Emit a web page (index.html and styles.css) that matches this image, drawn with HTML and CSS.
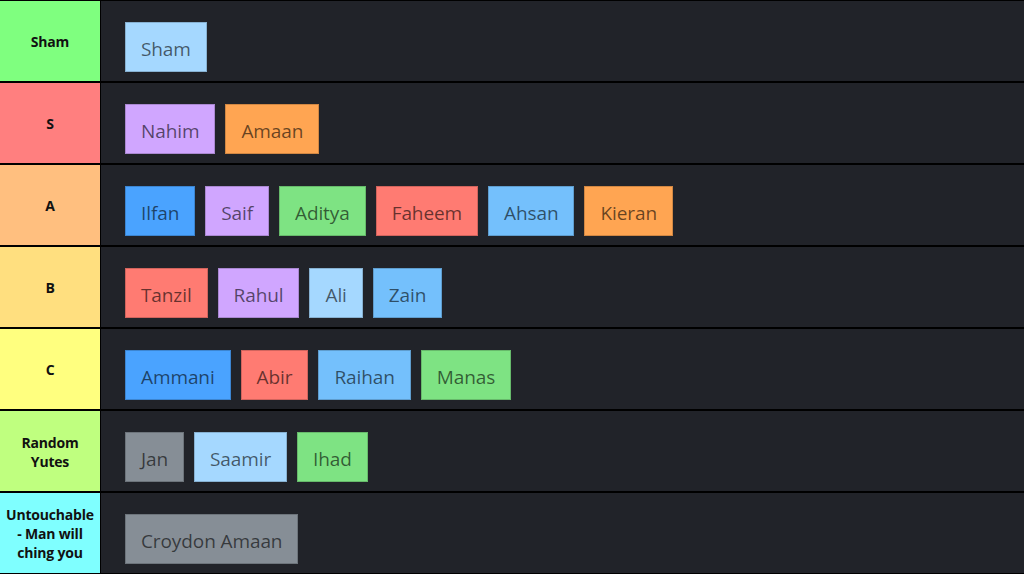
FILE: index.html
```html
<!DOCTYPE html>
<html>
<head>
<meta charset="utf-8">
<link rel="stylesheet" href="styles.css">
</head>
<body>
<div class="tiers">
  <div class="row">
    <div class="label t-sham">Sham</div>
    <div class="items">
      <div class="tile c-sky">Sham</div>
    </div>
  </div>
  <div class="row">
    <div class="label t-s">S</div>
    <div class="items">
      <div class="tile c-purple">Nahim</div>
      <div class="tile c-orange">Amaan</div>
    </div>
  </div>
  <div class="row">
    <div class="label t-a">A</div>
    <div class="items">
      <div class="tile c-blue">Ilfan</div>
      <div class="tile c-purple">Saif</div>
      <div class="tile c-green">Aditya</div>
      <div class="tile c-red">Faheem</div>
      <div class="tile c-mid">Ahsan</div>
      <div class="tile c-orange">Kieran</div>
    </div>
  </div>
  <div class="row">
    <div class="label t-b">B</div>
    <div class="items">
      <div class="tile c-red">Tanzil</div>
      <div class="tile c-purple">Rahul</div>
      <div class="tile c-sky">Ali</div>
      <div class="tile c-mid">Zain</div>
    </div>
  </div>
  <div class="row">
    <div class="label t-c">C</div>
    <div class="items">
      <div class="tile c-blue">Ammani</div>
      <div class="tile c-red">Abir</div>
      <div class="tile c-mid">Raihan</div>
      <div class="tile c-green">Manas</div>
    </div>
  </div>
  <div class="row">
    <div class="label t-r">Random<br>Yutes</div>
    <div class="items">
      <div class="tile c-gray">Jan</div>
      <div class="tile c-sky">Saamir</div>
      <div class="tile c-green">Ihad</div>
    </div>
  </div>
  <div class="row">
    <div class="label t-u">Untouchable<br>- Man will<br>ching you</div>
    <div class="items">
      <div class="tile c-gray">Croydon Amaan</div>
    </div>
  </div>
</div>
</body>
</html>
```
FILE: styles.css
```css
* { box-sizing: border-box; }
html, body {
  margin: 0;
  padding: 0;
  background: #000;
  width: 1024px;
  height: 574px;
  overflow: hidden;
}
.tiers {
  display: flex;
  flex-direction: column;
  gap: 2px;
  padding-top: 1px;
  font-family: "Open Sans", "Noto Sans", sans-serif;
}
.row {
  display: flex;
  height: 80px;
}
.label {
  width: 100px;
  flex: none;
  display: flex;
  align-items: center;
  justify-content: center;
  text-align: center;
  font-weight: 700;
  font-size: 14px;
  line-height: 19px;
  padding-top: 1px;
  color: #111;
  letter-spacing: -0.2px;
}
.t-sham { background: #7fff7f; }
.t-s { background: #ff7f7f; }
.t-a { background: #ffbf7f; }
.t-b { background: #ffdf7f; }
.t-c { background: #ffff7f; }
.t-r { background: #bfff7f; }
.t-u { background: #7fffff; }
.items {
  flex: 1;
  background: #212329;
  display: flex;
  align-items: flex-start;
  gap: 10px;
  padding: 21px 24px 0 24px;
  margin-left: 1px;
}
.tile {
  height: 50px;
  padding: 5px 15px 0 15px;
  border: 1px solid rgba(0, 0, 0, 0.18);
  font-size: 19px;
  line-height: 42px;
  color: rgba(0, 0, 0, 0.6);
  letter-spacing: -0.1px;
  white-space: nowrap;
}
.c-sky { background: #a5d8ff; }
.c-purple { background: #d0a6ff; }
.c-orange { background: #ffa552; }
.c-blue { background: #4aa3ff; }
.c-green { background: #7ee383; }
.c-red { background: #ff7b72; }
.c-mid { background: #74c0fc; }
.c-gray { background: #868e96; }
```
